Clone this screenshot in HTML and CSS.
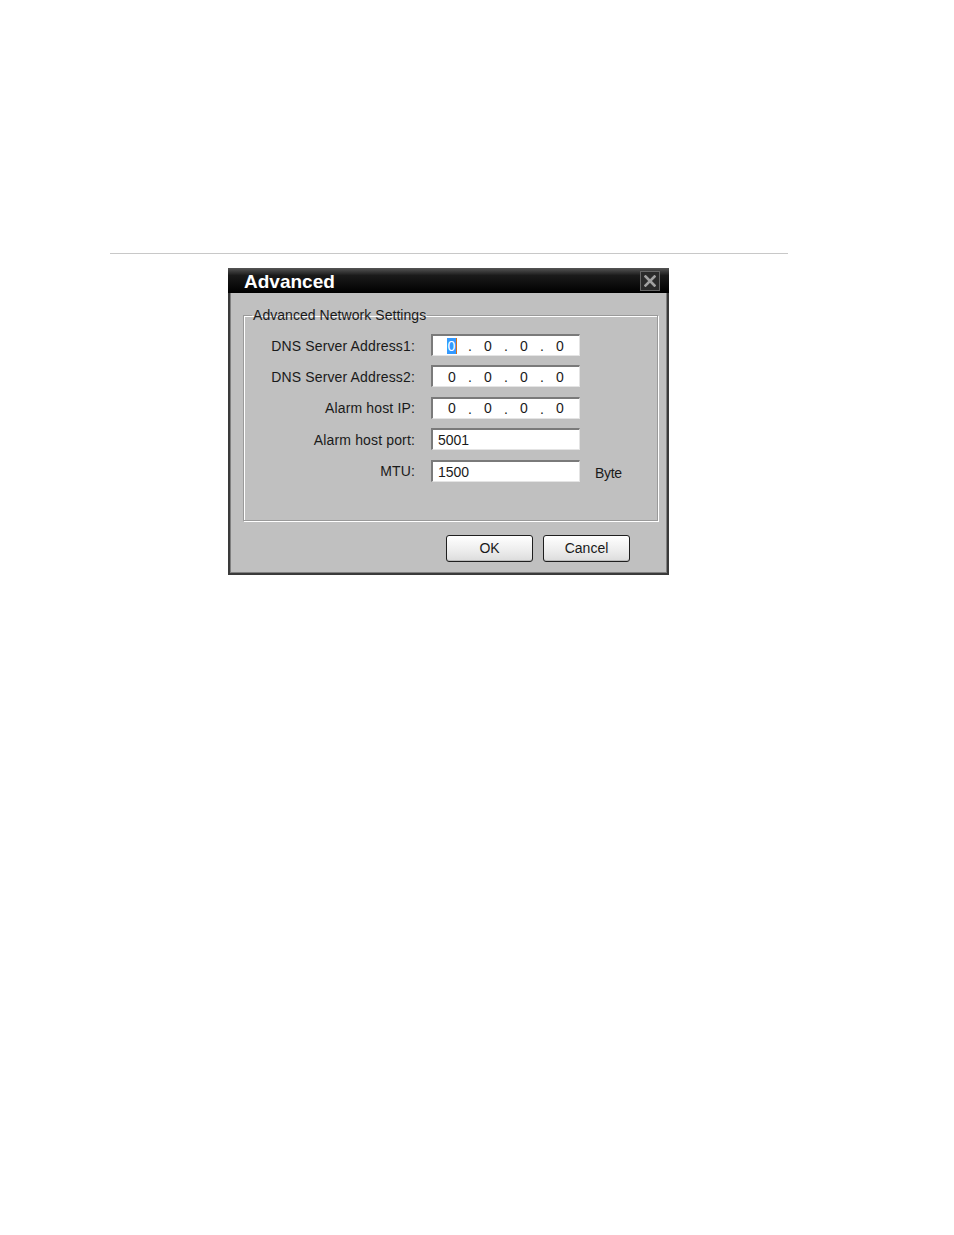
FILE: index.html
```html
<!DOCTYPE html>
<html>
<head>
<meta charset="utf-8">
<link rel="stylesheet" href="styles.css">
</head>
<body>
<div class="page">
  <div class="rule"></div>
  <div class="dialog">
    <div class="titlebar">
      <span class="title">Advanced</span>
      <span class="close"><svg width="12" height="12" viewBox="0 0 12 12"><path d="M1.5 1.5 L10.5 10.5 M10.5 1.5 L1.5 10.5" stroke="#a0a0a0" stroke-width="2.6" stroke-linecap="square"/></svg></span>
    </div>
    <div class="body">
      <fieldset class="group">
        <legend>Advanced Network Settings</legend>
        <div class="form">
          <label class="lbl">DNS Server Address1:</label>
          <div class="field ip"><span class="oct"><span class="sel">0</span></span><span class="dot">.</span><span class="oct">0</span><span class="dot">.</span><span class="oct">0</span><span class="dot">.</span><span class="oct">0</span></div>
          <span></span>
          <label class="lbl">DNS Server Address2:</label>
          <div class="field ip"><span class="oct">0</span><span class="dot">.</span><span class="oct">0</span><span class="dot">.</span><span class="oct">0</span><span class="dot">.</span><span class="oct">0</span></div>
          <span></span>
          <label class="lbl">Alarm host IP:</label>
          <div class="field ip"><span class="oct">0</span><span class="dot">.</span><span class="oct">0</span><span class="dot">.</span><span class="oct">0</span><span class="dot">.</span><span class="oct">0</span></div>
          <span></span>
          <label class="lbl">Alarm host port:</label>
          <div class="field text">5001</div>
          <span></span>
          <label class="lbl">MTU:</label>
          <div class="field text">1500</div>
          <span class="unit">Byte</span>
        </div>
      </fieldset>
      <div class="buttons">
        <button class="btn">OK</button>
        <button class="btn">Cancel</button>
      </div>
    </div>
  </div>
</div>
</body>
</html>
```
FILE: styles.css
```css
html, body {
  margin: 0;
  padding: 0;
  background: #fff;
  font-family: "Liberation Sans", Arial, sans-serif;
}
.page {
  width: 954px;
  height: 1235px;
  padding-top: 253px;
  box-sizing: border-box;
}
.rule {
  margin-left: 110px;
  width: 678px;
  height: 1px;
  background: #c8c8c8;
}
.dialog {
  width: 441px;
  margin: 14px 0 0 228px;
}
.titlebar {
  height: 25px;
  background: linear-gradient(#555 0%, #1a1a1a 30%, #000 100%);
  display: flex;
  align-items: center;
  justify-content: space-between;
  padding: 0 9px 0 16px;
}
.title {
  color: #fff;
  font-weight: bold;
  font-size: 19px;
  line-height: 25px;
  margin-top: 1px;
}
.close {
  width: 20px;
  height: 20px;
  box-sizing: border-box;
  background: #2a2a2a;
  border: 1px solid #666;
  display: flex;
  align-items: center;
  justify-content: center;
}
.body {
  background: #c0c0c0;
  border: 2px solid #3a3a3a;
  border-top: 0;
  box-shadow: inset -1px -1px 0 #808080, inset 1px 0 0 #808080;
  height: 282px;
  box-sizing: border-box;
  padding-top: 14px;
}
.group {
  margin: 0 9px 0 13px;
  padding: 0 0 38px 0;
  border: 1px solid #9a9a9a;
  box-shadow: 1px 1px 0 #fff, inset 1px 1px 0 #fff;
  font-size: 14px;
}
.group legend {
  padding: 0 1px;
  margin-left: 8px;
  color: #1a1a1a;
  line-height: 16px;
  letter-spacing: 0.05px;
}
.form {
  display: grid;
  grid-template-columns: 171px 149px auto;
  column-gap: 16px;
  row-gap: 9.4px;
  align-items: center;
  margin-top: 11px;
}
.lbl {
  text-align: right;
  color: #1a1a1a;
  margin-top: 1px;
  letter-spacing: 0.15px;
}
.field {
  height: 22px;
  box-sizing: border-box;
  background: #fff;
  border-top: 2px solid #7a7a7a;
  border-left: 2px solid #7a7a7a;
  border-right: 1px solid #e4e4e4;
  border-bottom: 1px solid #e4e4e4;
  color: #1a1a1a;
  font-size: 14px;
}
.ip {
  display: flex;
  align-items: center;
  padding-left: 10px;
}
.oct, .dot {
  width: 18px;
  text-align: center;
  line-height: 16px;
  color: #1a1a1a;
}
.dot {
  margin-top: 1px;
}
.sel {
  background: #3399ff;
  color: #fff;
  display: inline-block;
  padding: 0 1px;
  border-right: 1px solid #d07020;
}
.text {
  padding: 1px 0 0 5px;
  line-height: 18px;
}
.unit {
  color: #1a1a1a;
  margin-top: 5px;
  margin-left: -1px;
  letter-spacing: -0.3px;
}
.buttons {
  display: flex;
  gap: 10px;
  justify-content: flex-end;
  padding-right: 37px;
  margin-top: 14px;
}
.btn {
  width: 87px;
  height: 27px;
  border: 1px solid #1e1e1e;
  border-radius: 3px;
  background: linear-gradient(#ffffff, #ececec 60%, #dcdcdc);
  box-shadow: inset 0 -1px 0 #bbb;
  font-family: "Liberation Sans", Arial, sans-serif;
  font-size: 14px;
  color: #1a1a1a;
  padding: 0;
}
```
